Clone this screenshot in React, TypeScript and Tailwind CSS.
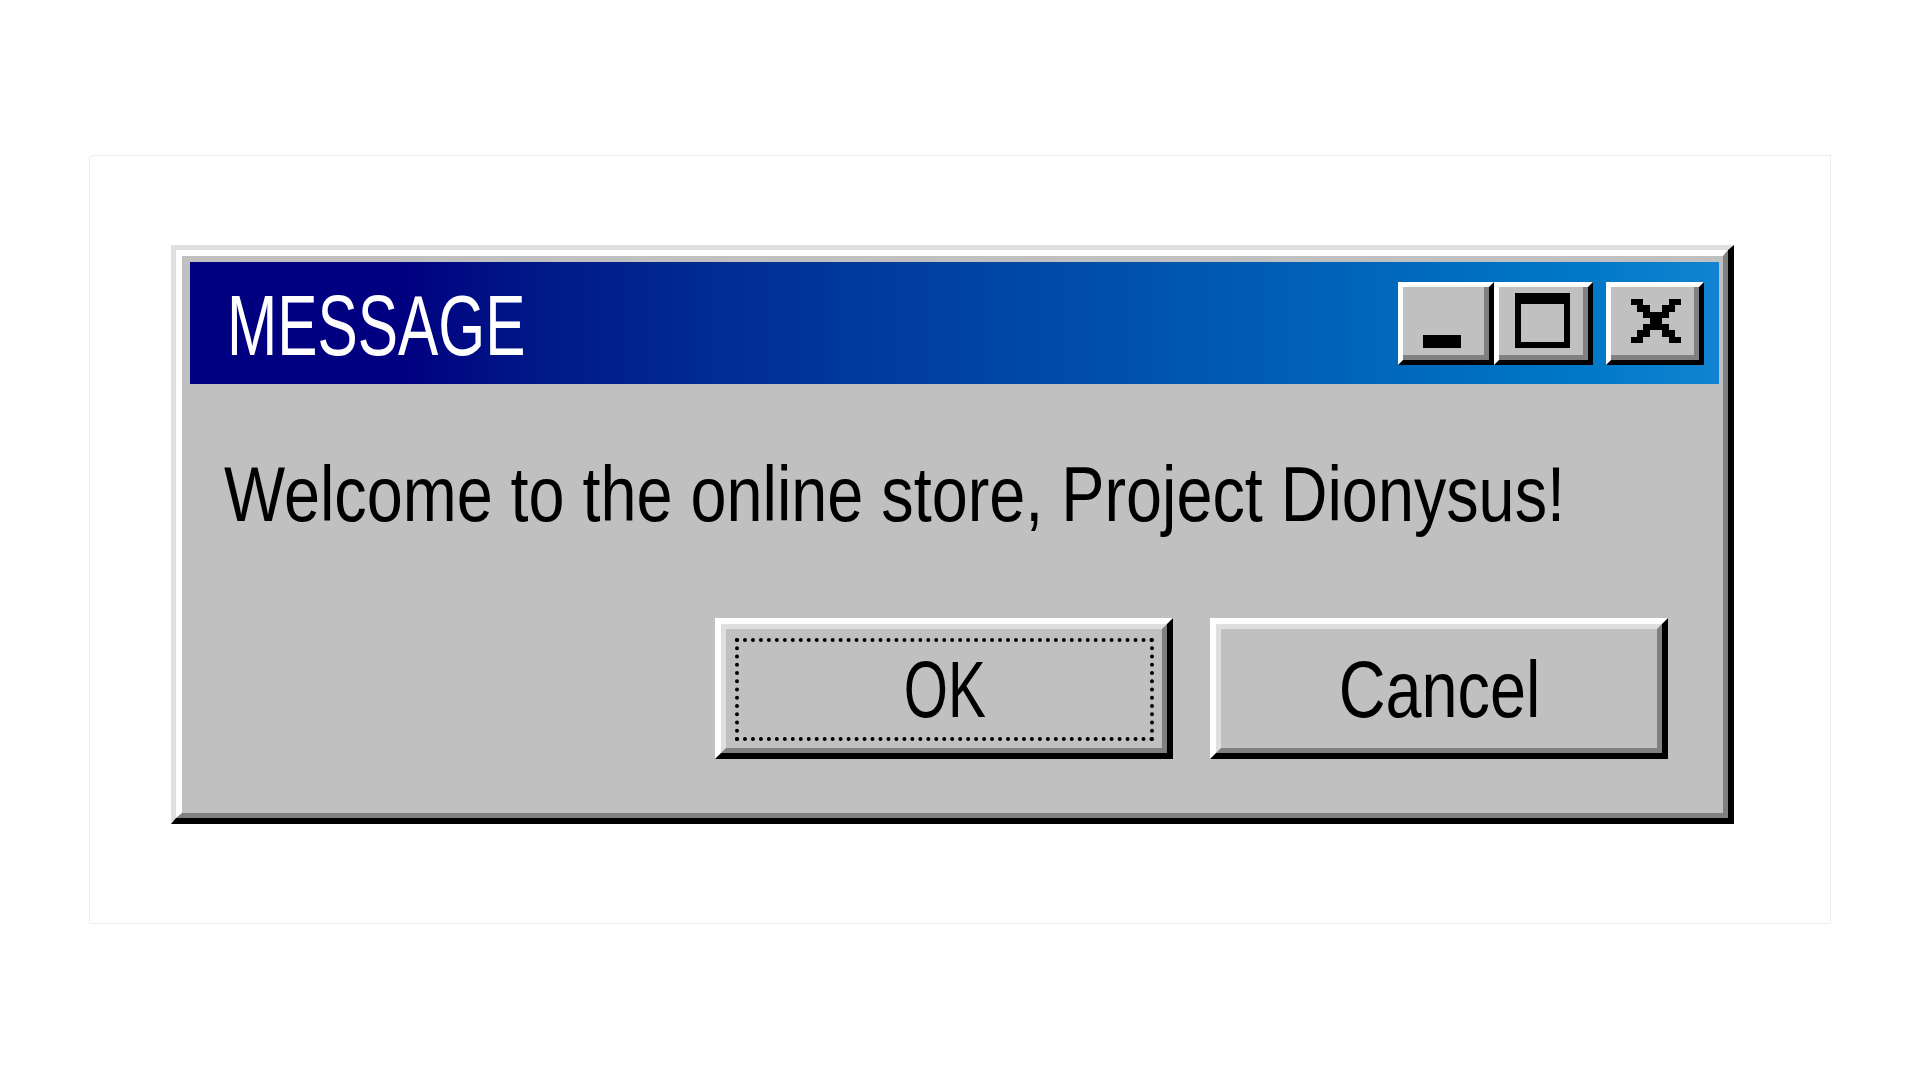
function TitleButton({ children, className = "" }: { children: React.ReactNode; className?: string }) {
  return (
    <div
      className={
        "h-[83px] border-[5px] border-t-white border-l-white border-r-black border-b-black bg-[#c0c0c0] " +
        className
      }
    >
      <div className="h-full border-r-[5px] border-b-[5px] border-r-[#808080] border-b-[#808080] flex">
        {children}
      </div>
    </div>
  );
}

function DialogButton({ label, focused, scale }: { label: string; focused?: boolean; scale: string }) {
  return (
    <div className="w-[458px] h-[141px] border-[6px] border-t-white border-l-white border-r-black border-b-black bg-[#c0c0c0]">
      <div className="h-full border-[5px] border-t-[#dfdfdf] border-l-[#dfdfdf] border-r-[#808080] border-b-[#808080] pl-[9px] pr-[8px] pt-[9px] pb-[7px]">
        <div
          className={
            "h-full flex items-center justify-center border-[4px] " +
            (focused ? "border-dotted border-black" : "border-transparent")
          }
        >
          <span className={"inline-block origin-center text-[80px] leading-none text-black whitespace-nowrap " + scale}>
            {label}
          </span>
        </div>
      </div>
    </div>
  );
}

export default function App() {
  return (
    <div className="w-full h-[1080px] bg-white pt-[155px] pl-[89px] font-['Liberation_Sans',Arial,sans-serif]">
      <div className="w-[1742px] h-[769px] border border-[#ececec] rounded-tl-[4px] pt-[89px] pl-[81px]">
        {/* dialog */}
        <div className="w-[1563px] border-[5px] border-r-[6px] border-b-[6px] border-t-[#dfdfdf] border-l-[#dfdfdf] border-r-black border-b-black">
          <div className="border-[6px] border-r-[5px] border-b-[5px] border-t-white border-l-white border-r-[#808080] border-b-[#808080] bg-[#c0c0c0] pt-[6px] pl-[8px] pr-[4px] pb-[54px]">
            {/* title bar */}
            <div className="h-[122px] flex items-center bg-linear-to-r from-[#000080] from-[14%] to-[#1084d0] pl-[37px] pr-[15px]">
              <span className="inline-block origin-left scale-x-[0.71] text-[85px] leading-none text-white pt-[4px] whitespace-nowrap">
                MESSAGE
              </span>
              <div className="ml-auto flex items-center">
                <TitleButton className="w-[96px]">
                  <div className="flex-1 flex items-end justify-center pb-[7px] pr-[4px]">
                    <svg width="38" height="13" viewBox="0 0 38 13">
                      <rect width="38" height="13" fill="#000" />
                    </svg>
                  </div>
                </TitleButton>
                <TitleButton className="w-[99px]">
                  <div className="flex-1 flex items-center justify-center pl-[2px]">
                    <svg width="55" height="55" viewBox="0 0 55 55">
                      <path d="M0 0H55V55H0Z M6 11V49H49V11Z" fill="#000" fillRule="evenodd" />
                    </svg>
                  </div>
                </TitleButton>
                <TitleButton className="w-[98px] ml-[13px]">
                  <div className="flex-1 flex items-center justify-center pl-[6px]">
                    <svg width="54" height="44" viewBox="0 0 8 7" shapeRendering="crispEdges" fill="#000">
                      <rect x="0" y="0" width="2" height="1" />
                      <rect x="6" y="0" width="2" height="1" />
                      <rect x="1" y="1" width="2" height="1" />
                      <rect x="5" y="1" width="2" height="1" />
                      <rect x="2" y="2" width="4" height="1" />
                      <rect x="3" y="3" width="2" height="1" />
                      <rect x="2" y="4" width="4" height="1" />
                      <rect x="1" y="5" width="2" height="1" />
                      <rect x="5" y="5" width="2" height="1" />
                      <rect x="0" y="6" width="2" height="1" />
                      <rect x="6" y="6" width="2" height="1" />
                    </svg>
                  </div>
                </TitleButton>
              </div>
            </div>

            {/* message */}
            <div className="mt-[71px] pl-[34px]">
              <span className="inline-block origin-left scale-x-[0.83] text-[78px] leading-none text-black whitespace-nowrap">
                Welcome to the online store, Project Dionysus!
              </span>
            </div>

            {/* buttons */}
            <div className="mt-[85px] flex justify-end gap-[37px] pr-[51px]">
              <DialogButton label="OK" focused scale="scale-x-[0.71]" />
              <DialogButton label="Cancel" scale="scale-x-[0.81]" />
            </div>
          </div>
        </div>
      </div>
    </div>
  );
}
